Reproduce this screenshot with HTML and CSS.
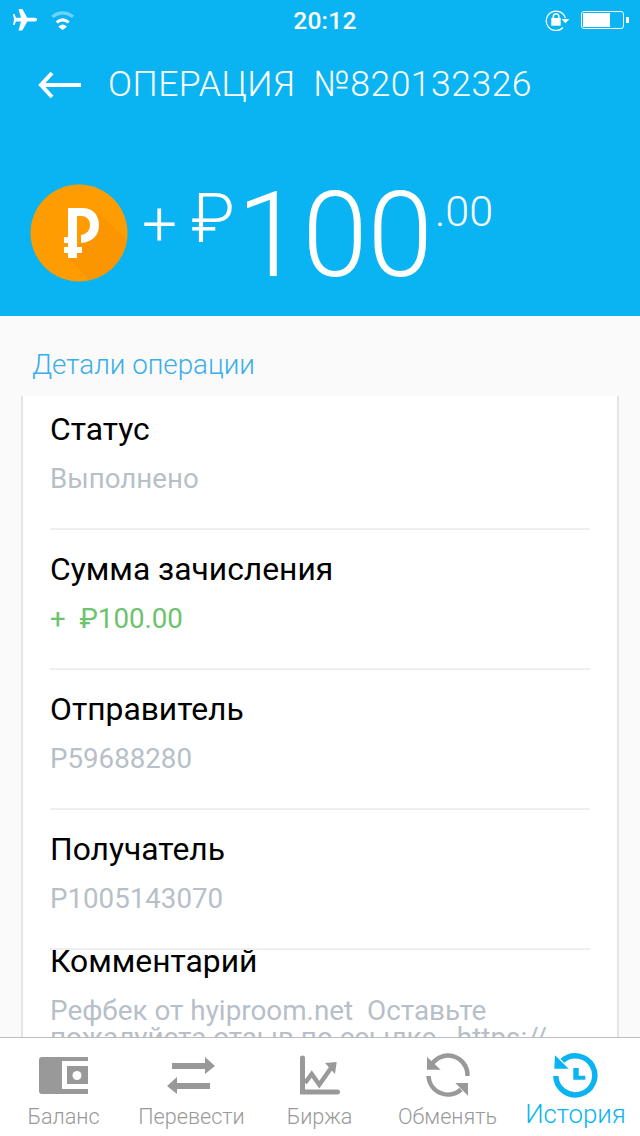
FILE: index.html

```html
<!DOCTYPE html>
<html lang="ru">
<head>
  <meta charset="UTF-8" />
  <meta name="viewport" content="width=device-width, initial-scale=1.0" />
  <title>Операция №820132326</title>
  <link rel="stylesheet" href="styles.css">
</head>
<body>

<div class="screen">
  <header class="top">
    <div class="status-bar">
      <div class="status-left">
        <svg width="26" height="24" viewBox="0 0 26 24"><path d="M26 11.500c0-1-1-1.700-2-1.700h-7.700L11.300 1H7.500l2.500 8.800H5L3.500 6H2l1 5.500L2 17h1.500L5 13.500h5L7.500 22.500h3.800l5-9H24c1 0 2-1 2-2z" fill="#fff"/></svg>
        <svg width="26" height="24" viewBox="0 0 26 24">
          <path d="M2.300 8.700Q12.700 1 23 8.700" fill="none" stroke="#fff" stroke-opacity=".4" stroke-width="3"/>
          <path d="M6.700 14.300Q12.700 9.500 18.700 14.300" fill="none" stroke="#fff" stroke-width="3"/>
          <path d="M8.300 18.700Q12.700 14.500 16.900 18.700L12.600 22z" fill="#fff"/>
        </svg>
      </div>
      <div class="clock">20:12</div>
      <div class="status-right">
        <svg class="rotation" width="27" height="24" viewBox="0 0 27 24">
          <path d="M21.300 10A9.700 9.700 0 1 0 19 19.500" fill="none" stroke="#fff" stroke-width="1.200"/>
          <path d="M17.700 11h7.600l-4 4.300z" fill="#fff"/>
          <rect x="7.300" y="10" width="9.400" height="7.700" fill="#fff"/>
          <path d="M9.300 10.500V8.500a2.800 2.800 0 0 1 5.600 0v2" fill="none" stroke="#fff" stroke-width="1.500"/>
        </svg>
        <div class="battery"><div class="battery-fill"></div></div>
        <div class="battery-cap"></div>
      </div>
    </div>
    <div class="nav-row">
      <svg class="back" width="44" height="30" viewBox="0 0 44 30"><path d="M14 3L3 15l11 12M3 15h40" fill="none" stroke="#fff" stroke-width="4"/></svg>
      <h1 class="nav-title">ОПЕРАЦИЯ&nbsp; №820132326</h1>
    </div>
    <div class="amount-row">
      <svg class="coin" width="98" height="98" viewBox="0 0 98 98">
        <circle cx="49" cy="49" r="48.500" fill="#ff9d00"/>
        <path d="M69 29L97 56A48.500 48.500 0 0 1 59 96L39 74z" fill="#fb9500"/>
        <path d="M38 24h14c11 0 17 7 17 17 0 11-7 17-18 18v-8c6-1 9-5 9-10s-3-9-9-9h-4v42h-9v-5h-4v-6h4v-4h-4v-6h4v-10z" fill="#fff"/>
        <rect x="46" y="63" width="6" height="6" fill="#fff"/>
      </svg>
      <span class="amount-plus">+</span>
      <span class="amount-sign">₽</span>
      <span class="amount-int">100</span>
      <span class="amount-dec">.00</span>
    </div>
  </header>

  <main class="content">
    <h2 class="section-title">Детали операции</h2>
    <div class="card">
      <div class="row">
        <div class="row-label">Статус</div>
        <div class="row-value">Выполнено</div>
      </div>
      <div class="row">
        <div class="row-label">Сумма зачисления</div>
        <div class="row-value green">+&nbsp; ₽100.00</div>
      </div>
      <div class="row">
        <div class="row-label">Отправитель</div>
        <div class="row-value">P59688280</div>
      </div>
      <div class="row">
        <div class="row-label">Получатель</div>
        <div class="row-value">P1005143070</div>
      </div>
      <div class="row row-last">
        <div class="row-label">Комментарий</div>
        <div class="row-value">Рефбек от hyiproom.net&nbsp; Оставьте пожалуйста отзыв по ссылке&nbsp;&nbsp; https://</div>
      </div>
    </div>
  </main>

  <nav class="tabs">
    <div class="tab">
      <svg width="50" height="46" viewBox="0 0 50 46">
        <path d="M3 5h20v37H3a3 3 0 0 1-3-3V8a3 3 0 0 1 3-3zM23 5h26v4H23zM23 37h26v5H23zM28 14h21v18H28z" fill="#999"/>
        <circle cx="38" cy="23.500" r="4.500" fill="#fff"/>
      </svg>
      <span class="tab-label">Баланс</span>
    </div>
    <div class="tab">
      <svg width="50" height="46" viewBox="0 0 50 46">
        <path d="M5 11h33V5l10 9-10 8v-5H5zM43 31H10v-6L0 34l10 8v-5h33z" fill="#999"/>
      </svg>
      <span class="tab-label">Перевести</span>
    </div>
    <div class="tab">
      <svg width="50" height="46" viewBox="0 0 50 46">
        <path d="M7.500 6v34h35" fill="none" stroke="#999" stroke-width="5" stroke-linecap="round"/>
        <path d="M10 31l6.700-9 7.600 10.700L36 16" fill="none" stroke="#999" stroke-width="4.500"/>
        <path d="M30 11l11.700-1L40 22z" fill="#999"/>
      </svg>
      <span class="tab-label">Биржа</span>
    </div>
    <div class="tab">
      <svg width="50" height="46" viewBox="0 0 50 46">
        <path d="M9 12A19.500 19.500 0 0 1 44.500 24M5.500 24A19.500 19.500 0 0 0 38 37.500" fill="none" stroke="#999" stroke-width="4.500"/>
        <path d="M4 5v12.700h13.700zM45 31H32.300L45 43.700z" fill="#999"/>
      </svg>
      <span class="tab-label">Обменять</span>
    </div>
    <div class="tab tab-active">
      <svg width="50" height="46" viewBox="0 0 50 46">
        <path d="M11.300 8.800A19.500 19.500 0 1 1 4.800 24" fill="none" stroke="#0ab4f2" stroke-width="5.500"/>
        <path d="M4 3.300L3.300 16.700h14.400z" fill="#0ab4f2"/>
        <path d="M22.300 16h5.400v7.700h6.600v4H22.300z" fill="#0ab4f2"/>
      </svg>
      <span class="tab-label">История</span>
    </div>
  </nav>
</div>

</body>
</html>
```

FILE: styles.css

```css
* { box-sizing: border-box; }
html, body { margin: 0; padding: 0; }
body { background: #fafafa; font-family: Roboto, sans-serif; }
.screen { width: 640px; height: 1136px; display: flex; flex-direction: column; overflow: hidden; }

.top { background: #0ab4f2; color: #fff; height: 316px; flex: none; }
.status-bar { height: 40px; display: flex; align-items: center; justify-content: space-between; padding: 0 11px; position: relative; }
.status-left { display: flex; align-items: center; gap: 13px; }
.clock { position: absolute; left: 10px; right: 0; text-align: center; font-size: 24.500px; font-weight: 500; letter-spacing: .3px; }
.status-right { display: flex; align-items: center; }
.rotation { margin-right: 10px; }
.battery { width: 43px; height: 18px; border: 1px solid #fff; border-radius: 3px; padding: 1px; }
.battery-fill { width: 27px; height: 100%; background: #fff; }
.battery-cap { width: 3px; height: 6px; background: #fff; margin-left: 2px; }

.nav-row { height: 88px; display: flex; align-items: center; padding-left: 38px; }
.back { flex: none; margin-top: 1px; }
.nav-title { margin: 0 0 0 26px; font-size: 35.500px; font-weight: 300; letter-spacing: .5px; white-space: nowrap; }

.amount-row { display: flex; align-items: flex-start; padding: 56px 0 0 30px; }
.coin { flex: none; }
.amount-plus { font-size: 62px; font-weight: 300; line-height: 60px; margin: 10px 0 0 14px; }
.amount-sign { font-size: 68px; font-weight: 300; line-height: 70px; margin: 0 0 0 14px; }
.amount-int { font-size: 118px; font-weight: 300; line-height: 100px; margin: 2px 0 0 2px; }
.amount-dec { font-size: 43px; font-weight: 300; line-height: 50px; margin: 2px 0 0 2px; }

.content { flex: 1; min-height: 0; overflow: hidden; }
.section-title { margin: 0; font-size: 27.750px; font-weight: 300; color: #3aaeea; padding: 32px 0 0 32px; line-height: 34px; height: 80px; }
.card { margin: 0 21px; background: #fff; border-left: 2px solid #e4e4e4; border-right: 2px solid #e4e4e4; padding: 0 27px; }
.row { height: 134px; border-bottom: 2px solid #eee; padding-top: 15px; }
.row + .row { height: 140px; padding-top: 21px; }
.row-label { font-size: 31.800px; line-height: 36px; color: #000; }
.row-value { font-size: 27.700px; line-height: 34px; color: #b7bfc8; margin-top: 15px; }
.row-value.green { color: #6cc36c; }
.row + .row-last { height: auto; padding-top: 0; border-bottom: none; }
.row-last .row-label { margin-top: -7px; }
.row-last .row-value { font-size: 27.850px; line-height: 27px; margin-top: 18px; }

.tabs { flex: none; height: 99px; background: #fff; border-top: 1px solid #bdbdbd; display: grid; grid-template-columns: repeat(5, 1fr); }
.tab { display: flex; flex-direction: column; align-items: center; padding-top: 14px; color: #999; }
.tab svg { display: block; }
.tab-label { font-size: 21.600px; font-weight: 300; line-height: 26px; margin: 6px 1px 0 0; white-space: nowrap; }
.tab-active { color: #0ab4f2; }
.tab-active .tab-label { font-size: 25.800px; margin-top: 3px; }
```
